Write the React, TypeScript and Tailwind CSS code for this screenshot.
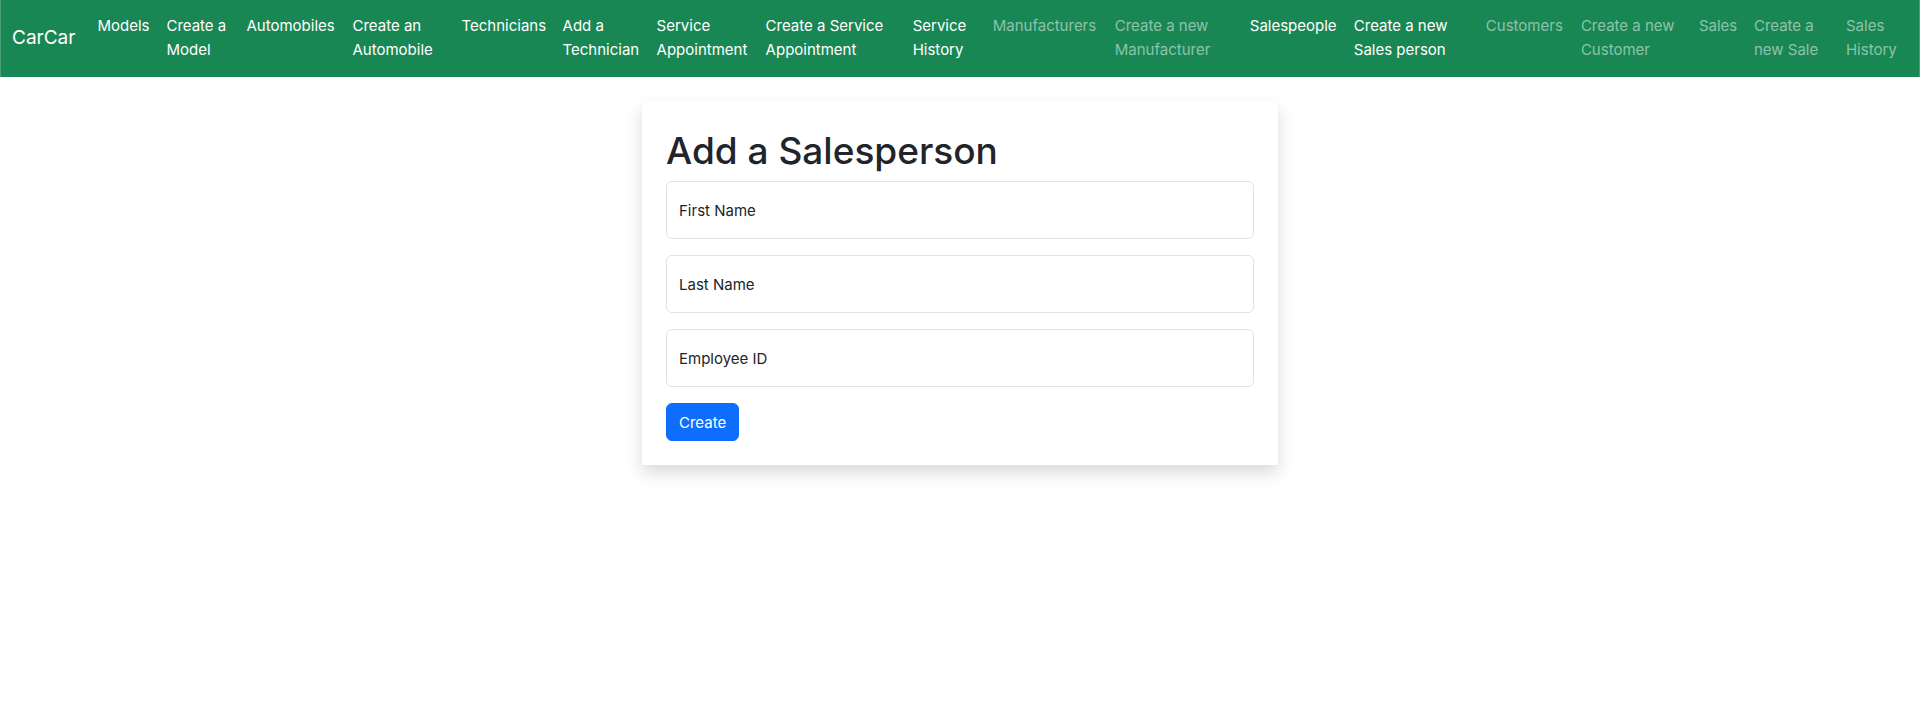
import { useState } from "react";

type NavItem = { label: string; muted?: boolean };

const navItems: NavItem[] = [
  { label: "Models" },
  { label: "Create a Model" },
  { label: "Automobiles" },
  { label: "Create an Automobile" },
  { label: "Technicians" },
  { label: "Add a Technician" },
  { label: "Service Appointment" },
  { label: "Create a Service Appointment" },
  { label: "Service History" },
  { label: "Manufacturers", muted: true },
  { label: "Create a new Manufacturer", muted: true },
  { label: "Salespeople" },
  { label: "Create a new Sales person" },
  { label: "Customers", muted: true },
  { label: "Create a new Customer", muted: true },
  { label: "Sales", muted: true },
  { label: "Create a new Sale", muted: true },
  { label: "Sales History", muted: true },
];

const fields = [
  { id: "first_name", label: "First Name" },
  { id: "last_name", label: "Last Name" },
  { id: "employee_id", label: "Employee ID" },
];

function Navbar() {
  return (
    <nav className="flex items-center gap-[14px] border-x border-[#4a9f77] bg-[#198754] px-[11px] pt-[6px] pb-[7px] text-white">
      <a href="#home" className="shrink-0 text-[19px] leading-[30px]">
        CarCar
      </a>
      <ul className="grid grow grid-cols-[69fr_80fr_106fr_109fr_101fr_94fr_109fr_147fr_80fr_122fr_135fr_104fr_132fr_95fr_118fr_55fr_92fr_70fr]">
        {navItems.map((item) => (
          <li key={item.label}>
            <a
              href={"#" + item.label.toLowerCase().replaceAll(" ", "-")}
              className={
                item.muted
                  ? "block px-2 py-2 text-white/50"
                  : "block px-2 py-2 text-white"
              }
            >
              {item.label}
            </a>
          </li>
        ))}
      </ul>
    </nav>
  );
}

function FloatingField({ id, label }: { id: string; label: string }) {
  const [value, setValue] = useState("");
  return (
    <div className="relative mb-4">
      <input
        id={id}
        name={id}
        type="text"
        value={value}
        onChange={(e) => setValue(e.target.value)}
        className="block h-[58px] w-full rounded-md border border-[#dee2e6] bg-white px-3 pt-6 pb-2 outline-none focus:border-[#86b7fe]"
      />
      <label
        htmlFor={id}
        className={
          value
            ? "pointer-events-none absolute top-1 left-[13px] text-xs text-[#212529]/65"
            : "pointer-events-none absolute inset-y-0 left-[13px] flex items-center pt-0.5"
        }
      >
        {label}
      </label>
    </div>
  );
}

export default function App() {
  return (
    <div className="min-h-screen bg-white font-['Inter',sans-serif] text-[15px] leading-6 text-[#212529]">
      <Navbar />
      <main className="mx-auto mt-6 w-full max-w-[636px] bg-white p-6 shadow-[0_8px_16px_rgba(0,0,0,0.15)]">
        <h1 className="pt-0.5 pb-1.5 text-[37px] leading-[48px] font-medium">
          Add a Salesperson
        </h1>
        <form onSubmit={(e) => e.preventDefault()}>
          {fields.map((field) => (
            <FloatingField key={field.id} id={field.id} label={field.label} />
          ))}
          <button
            type="submit"
            className="block rounded-md border border-[#0d6efd] bg-[#0d6efd] px-3 pt-[7px] pb-[5px] text-white"
          >
            Create
          </button>
        </form>
      </main>
    </div>
  );
}
